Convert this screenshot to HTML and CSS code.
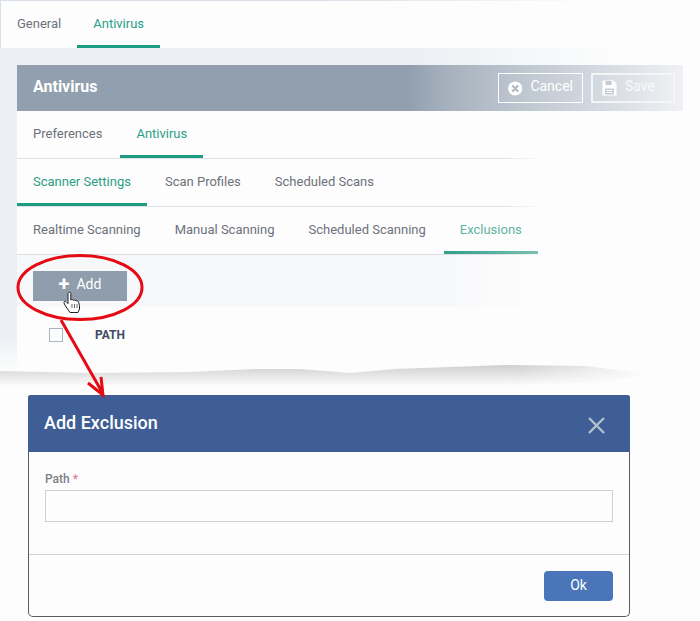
FILE: index.html
```html
<!DOCTYPE html>
<html lang="en">
<head>
    <meta charset="UTF-8">
    <meta name="viewport" content="width=device-width, initial-scale=1.0">
    <title>Add Exclusion</title>
    <link rel="stylesheet" href="styles.css">
</head>
<body>
    <div class="page">
        <div class="app">
            <div class="top-tabs">
                <a class="tab">General</a>
                <a class="tab active">Antivirus</a>
            </div>
            <div class="panel">
                <div class="panel-header">
                    <h2>Antivirus</h2>
                    <div class="header-actions">
                        <button class="ghost-btn cancel-btn">
                            <svg width="15" height="15" viewBox="0 0 15 15">
                                <circle cx="7.5" cy="7.5" r="7.4" fill="#fff"/>
                                <path d="M5 5l5 5M10 5l-5 5" stroke="#aeb8c3" stroke-width="2.2" stroke-linecap="round"/>
                            </svg>
                            <span>Cancel</span>
                        </button>
                        <button class="ghost-btn save-btn">
                            <svg width="15" height="16" viewBox="0 0 15 16">
                                <path d="M0.500 0.500h11l3 3v12h-14z" fill="#fff"/>
                                <path d="M3.500 1v4h6V1M3 8.500h9v6H3z" fill="#c5ccd5"/>
                                <path d="M4.500 10.500h6M4.500 12.500h6" stroke="#fff"/>
                            </svg>
                            <span>Save</span>
                        </button>
                    </div>
                </div>
                <div class="tab-row">
                    <a class="tab">Preferences</a>
                    <a class="tab active">Antivirus</a>
                </div>
                <div class="tab-row">
                    <a class="tab active">Scanner Settings</a>
                    <a class="tab">Scan Profiles</a>
                    <a class="tab">Scheduled Scans</a>
                </div>
                <div class="tab-row">
                    <a class="tab">Realtime Scanning</a>
                    <a class="tab">Manual Scanning</a>
                    <a class="tab">Scheduled Scanning</a>
                    <a class="tab active fading">Exclusions</a>
                </div>
                <div class="toolbar">
                    <button class="add-btn"><span class="plus">+</span> Add</button>
                </div>
                <div class="table-head">
                    <span class="checkbox"></span>
                    <span class="col-path">PATH</span>
                </div>
            </div>
        </div>

        <div class="dialog">
            <div class="dialog-header">
                <h3>Add Exclusion</h3>
                <svg class="dialog-close" width="17" height="17" viewBox="0 0 17 17">
                    <path d="M1 1l15 15M16 1L1 16" stroke="#b5c0cd" stroke-width="2.400"/>
                </svg>
            </div>
            <div class="dialog-body">
                <label class="field-label" for="path">Path <span class="req">*</span></label>
                <input class="field-input" type="text" id="path">
            </div>
            <div class="dialog-footer">
                <button class="ok-btn">Ok</button>
            </div>
        </div>

        <!-- torn edge, red callout and mouse pointer drawn over the screenshot -->
        <svg class="annotations" width="700" height="621" viewBox="0 0 700 621">
            <defs>
                <linearGradient id="tear" x1="0" y1="0" x2="0" y2="1">
                    <stop offset="0" stop-color="#cfcfcf"/>
                    <stop offset="1" stop-color="#fdfdfd"/>
                </linearGradient>
                <linearGradient id="tear-fade" x1="0" y1="0" x2="1" y2="0">
                    <stop offset="0.8" stop-color="#fff"/>
                    <stop offset="1" stop-color="#000"/>
                </linearGradient>
                <mask id="tear-mask" maskUnits="userSpaceOnUse" x="0" y="360" width="650" height="30">
                    <rect x="0" y="360" width="650" height="30" fill="url(#tear-fade)"/>
                </mask>
            </defs>
            <path d="M0 371L90 373L190 372L255 369L300 369L350 373L395 369L505 365L585 366L625 371L650 374L600 382L500 386L200 386L0 385Z" fill="url(#tear)" mask="url(#tear-mask)"/>
            <ellipse cx="80" cy="287.500" rx="62" ry="32" fill="none" stroke="#e60a14" stroke-width="3"/>
            <path d="M61 320L102 392M88 383L103 395L101 377" fill="none" stroke="#e60a14" stroke-width="3"/>
            <path d="M68 293.500c0-1.800 2.800-1.800 2.800 0v6.500c.8-.7 2.200-.5 2.600.4.900-.6 2.200-.3 2.600.6.900-.5 2.200-.2 2.500.8l1 3.700v3.500l-1.500 3.500h-8l-4.500-6.500-1.500-3c-.6-1.500 1.200-2.400 2.200-1.300l1.800 2z" fill="#fff" stroke="#222" stroke-width="1"/>
            <path d="M72 304v4M74.500 304v4M77 304v4" stroke="#222" stroke-width=".7"/>
        </svg>
    </div>
</body>
</html>
```

FILE: styles.css
```css
body {
    margin: 0;
    background: #fdfdfd;
    font-family: Roboto, Arial, sans-serif;
    color: #6d717c;
}
.page {
    position: relative;
    width: 700px;
    height: 621px;
    overflow: hidden;
}
.app {
    height: 370px;
    background:
        linear-gradient(90deg, #ecf0f4 415px, #fdfdfd 630px) 0 0 / 100% 65px no-repeat,
        linear-gradient(180deg, #ecf0f4 335px, #fdfdfd 372px) 0 0 / 17px 100% no-repeat;
}

/* tabs */
.tab {
    display: flex;
    align-items: center;
    padding: 0 16px;
    font-size: 13px;
    white-space: nowrap;
    border-bottom: 3px solid transparent;
}
.tab.active {
    color: #2b9d86;
    border-bottom-color: #1c9c80;
}
.tab.fading {
    color: #5fb3a2;
    border-image: linear-gradient(90deg, #2fa088, #7cc0b0) 1;
}
.top-tabs {
    display: flex;
    height: 48px;
    box-sizing: border-box;
    background: #fdfdfd;
    border-top: 1px solid;
    border-left: 1px solid;
    border-image: linear-gradient(90deg, #d8e0e9 320px, #fdfdfd 600px) 1;
}

/* main panel */
.panel {
    margin: 17px 0 0 17px;
    height: 305px;
    background: #fdfdfd;
}
.panel-header {
    display: flex;
    justify-content: space-between;
    align-items: center;
    width: 666px;
    height: 46px;
    padding: 0 8px 0 16px;
    box-sizing: border-box;
    background: linear-gradient(90deg, #919fae 390px, #a7b2be 433px, #b8c1cb 483px, #d4dae1 583px, #f0f1f3 666px);
}
.panel-header h2 {
    margin: 0 0 4px;
    font-size: 16px;
    font-weight: 700;
    color: #fff;
}
.header-actions {
    display: flex;
    gap: 8px;
}
.ghost-btn {
    display: flex;
    align-items: center;
    gap: 8px;
    height: 30px;
    padding: 0 9px;
    background: none;
    font-family: inherit;
    font-size: 14px;
    color: #fff;
}
.ghost-btn span {
    margin-bottom: 4px;
}
.cancel-btn {
    width: 85px;
    border: 1px solid #fff;
}
.save-btn {
    width: 84px;
    border: 2px solid #f3f5f7;
    color: #f8f9fa;
}
.tab-row {
    display: flex;
    gap: 2px;
    width: 528px;
    height: 48px;
    box-sizing: border-box;
    border-bottom: 1px solid;
    border-image: linear-gradient(90deg, #dcdfe4 480px, #fdfdfd 528px) 1;
}
.toolbar {
    width: 533px;
    height: 52px;
    padding: 16px 0 0 16px;
    box-sizing: border-box;
    background: linear-gradient(90deg, #f7f8fa 420px, #fdfdfd 533px);
}
.add-btn {
    display: flex;
    align-items: center;
    justify-content: center;
    gap: 7px;
    width: 94px;
    height: 30px;
    padding: 0 0 4px;
    border: none;
    background: #8f9dad;
    font-family: inherit;
    font-size: 14px;
    color: #fff;
}
.plus {
    font-size: 20px;
    font-weight: 700;
    line-height: 1;
}
.table-head {
    display: flex;
    align-items: center;
    height: 55px;
    padding-left: 32px;
}
.checkbox {
    width: 12px;
    height: 12px;
    border: 1px solid #a9b1bd;
}
.col-path {
    margin-left: 32px;
    font-size: 12px;
    font-weight: 700;
    color: #414b63;
}

/* dialog */
.dialog {
    width: 602px;
    height: 222px;
    margin: 25px 0 0 28px;
    box-sizing: border-box;
    display: flex;
    flex-direction: column;
    background: #fdfdfd;
    border: 1px solid #5b5b5f;
    border-top: none;
    border-radius: 3px 3px 5px 5px;
}
.dialog-header {
    display: flex;
    justify-content: space-between;
    align-items: center;
    height: 57px;
    margin: 0 -1px;
    padding: 0 25px 2px 16px;
    box-sizing: border-box;
    background: #3e5e95;
    border-radius: 3px 3px 0 0;
}
.dialog-header h3 {
    margin: 0;
    font-size: 18px;
    font-weight: 500;
    color: #fff;
}
.dialog-close {
    margin-top: 5px;
}
.dialog-body {
    height: 103px;
    padding: 20px 16px 0;
    box-sizing: border-box;
    border-bottom: 1px solid #cdd3dc;
}
.field-label {
    display: block;
    margin-bottom: 4px;
    font-size: 12px;
    font-weight: 500;
    color: #7b7f88;
}
.req {
    color: #d8808c;
}
.field-input {
    display: block;
    width: 100%;
    height: 32px;
    box-sizing: border-box;
    border: 1px solid #cdd0d9;
    background: #fdfdfd;
}
.dialog-footer {
    display: flex;
    justify-content: flex-end;
    padding: 16px 16px 0;
}
.ok-btn {
    width: 69px;
    height: 30px;
    padding: 0 0 2px;
    border: none;
    border-radius: 4px;
    background: #4a76b9;
    font-family: inherit;
    font-size: 14px;
    color: #fff;
}
.annotations {
    position: absolute;
    top: 0;
    left: 0;
    pointer-events: none;
}
```
